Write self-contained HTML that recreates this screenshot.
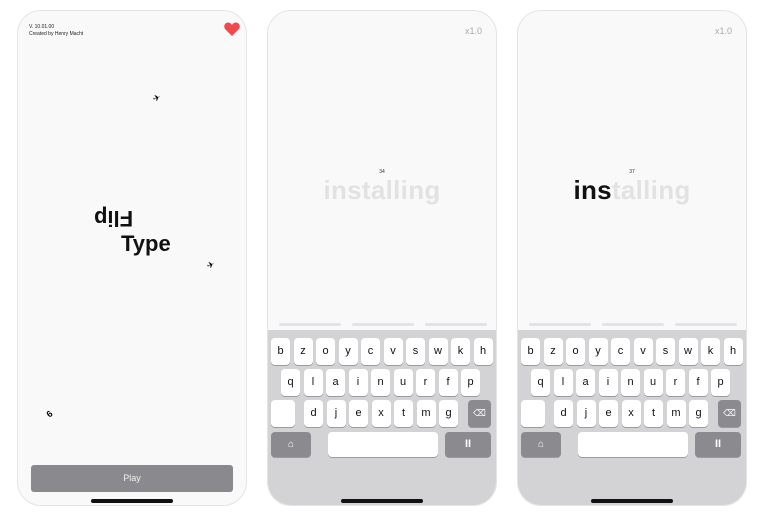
<!DOCTYPE html><html><head><style>
body{margin:0;width:757px;height:512px;background:#fff;position:relative;overflow:hidden;font-family:"Liberation Sans",sans-serif}
.ph{position:absolute;top:10px;width:228px;height:494px;border:1px solid #e4e4e4;border-radius:24px;background:#f9f9f9;overflow:hidden}
.a{position:absolute}
.kb{position:absolute;left:0;top:319px;width:228px;height:175px;background:#d3d3d6}
.k{position:absolute;width:19px;height:27px;background:#fff;border-radius:4px;box-shadow:0 1px 0 #9a9aa0;font-size:11px;text-align:center;line-height:26px;color:#111}
.d{background:#8a8a8f;color:#fff}
.hb{position:absolute;left:73px;top:488px;width:82px;height:4px;border-radius:2px;background:#111}
.sg{position:absolute;top:312px;height:3px;width:62px;background:#e3e3e3;border-radius:2px}
.tx{position:absolute;left:0;width:228px;text-align:center;top:164px;font-weight:bold;font-size:26px;color:#e2e2e2;letter-spacing:0.3px}
.num{position:absolute;left:0;width:228px;text-align:center;top:158px;font-size:5px;color:#333}
.x{position:absolute;right:14px;top:15px;font-size:9px;color:#aaa}
</style></head><body>
<div class="ph" style="left:17px">
<div class="a" style="left:11px;top:13px;font-size:5px;line-height:7px;color:#222">V. 10.01.00<br>Created by Henry Macht</div>
<svg class="a" style="left:206px;top:11px" width="16" height="14" viewBox="0 0 16 14"><path d="M8 14L1.5 7.5C-1 5 0.5 0.5 4 0.5c2 0 3.2 1.2 4 2.5C8.8 1.7 10 0.5 12 0.5c3.5 0 5 4.5 2.5 7z" fill="#f04a4f"/></svg>
<div class="a" style="left:76px;top:194px;font-weight:bold;font-size:22px;transform:rotate(180deg);color:#111">Flip</div>
<div class="a" style="left:103px;top:220px;font-weight:bold;font-size:22px;color:#111">Type</div>
<div class="a" style="left:135px;top:82px;font-size:9px;transform:rotate(-20deg)">✈</div>
<div class="a" style="left:189px;top:249px;font-size:9px;transform:rotate(-20deg)">✈</div>
<div class="a" style="left:29px;top:398px;font-size:9px;font-weight:bold;transform:rotate(-40deg)">6</div>
<div class="a" style="left:13px;top:454px;width:202px;height:27px;background:#8a8a8e;border-radius:3px;color:#f0f0f0;font-size:9px;text-align:center;line-height:27px">Play</div>
<div class="hb"></div>
</div>

<div class="ph" style="left:267px">
<div class="x">x1.0</div>
<div class="num">34</div>
<div class="tx">installing</div>
<div class="sg" style="left:11px"></div><div class="sg" style="left:84px"></div><div class="sg" style="left:157px"></div>
<div class="kb">
<div class="k" style="left:3px;top:8px">b</div><div class="k" style="left:25.5px;top:8px">z</div><div class="k" style="left:48px;top:8px">o</div><div class="k" style="left:70.5px;top:8px">y</div><div class="k" style="left:93px;top:8px">c</div><div class="k" style="left:115.5px;top:8px">v</div><div class="k" style="left:138px;top:8px">s</div><div class="k" style="left:160.5px;top:8px">w</div><div class="k" style="left:183px;top:8px">k</div><div class="k" style="left:205.5px;top:8px">h</div>
<div class="k" style="left:13px;top:39px">q</div><div class="k" style="left:35.5px;top:39px">l</div><div class="k" style="left:58px;top:39px">a</div><div class="k" style="left:80.5px;top:39px">i</div><div class="k" style="left:103px;top:39px">n</div><div class="k" style="left:125.5px;top:39px">u</div><div class="k" style="left:148px;top:39px">r</div><div class="k" style="left:170.5px;top:39px">f</div><div class="k" style="left:193px;top:39px">p</div>
<div class="k" style="left:3px;top:70px;width:24px"></div>
<div class="k" style="left:36px;top:70px">d</div><div class="k" style="left:58.5px;top:70px">j</div><div class="k" style="left:81px;top:70px">e</div><div class="k" style="left:103.5px;top:70px">x</div><div class="k" style="left:126px;top:70px">t</div><div class="k" style="left:148.5px;top:70px">m</div><div class="k" style="left:171px;top:70px">g</div>
<div class="k d" style="left:200px;top:70px;width:23px;font-size:9px">⌫</div>
<div class="k d" style="left:3px;top:102px;width:40px;height:25px;line-height:25px;font-size:10px">⌂</div>
<div class="k" style="left:60px;top:102px;width:110px;height:25px"></div>
<div class="k d" style="left:177px;top:102px;width:46px;height:25px;line-height:25px;font-weight:bold">II</div>
</div>
<div class="hb"></div>
</div>

<div class="ph" style="left:517px">
<div class="x">x1.0</div>
<div class="num">37</div>
<div class="tx"><span style="color:#111">ins</span>talling</div>
<div class="sg" style="left:11px"></div><div class="sg" style="left:84px"></div><div class="sg" style="left:157px"></div>
<div class="kb">
<div class="k" style="left:3px;top:8px">b</div><div class="k" style="left:25.5px;top:8px">z</div><div class="k" style="left:48px;top:8px">o</div><div class="k" style="left:70.5px;top:8px">y</div><div class="k" style="left:93px;top:8px">c</div><div class="k" style="left:115.5px;top:8px">v</div><div class="k" style="left:138px;top:8px">s</div><div class="k" style="left:160.5px;top:8px">w</div><div class="k" style="left:183px;top:8px">k</div><div class="k" style="left:205.5px;top:8px">h</div>
<div class="k" style="left:13px;top:39px">q</div><div class="k" style="left:35.5px;top:39px">l</div><div class="k" style="left:58px;top:39px">a</div><div class="k" style="left:80.5px;top:39px">i</div><div class="k" style="left:103px;top:39px">n</div><div class="k" style="left:125.5px;top:39px">u</div><div class="k" style="left:148px;top:39px">r</div><div class="k" style="left:170.5px;top:39px">f</div><div class="k" style="left:193px;top:39px">p</div>
<div class="k" style="left:3px;top:70px;width:24px"></div>
<div class="k" style="left:36px;top:70px">d</div><div class="k" style="left:58.5px;top:70px">j</div><div class="k" style="left:81px;top:70px">e</div><div class="k" style="left:103.5px;top:70px">x</div><div class="k" style="left:126px;top:70px">t</div><div class="k" style="left:148.5px;top:70px">m</div><div class="k" style="left:171px;top:70px">g</div>
<div class="k d" style="left:200px;top:70px;width:23px;font-size:9px">⌫</div>
<div class="k d" style="left:3px;top:102px;width:40px;height:25px;line-height:25px;font-size:10px">⌂</div>
<div class="k" style="left:60px;top:102px;width:110px;height:25px"></div>
<div class="k d" style="left:177px;top:102px;width:46px;height:25px;line-height:25px;font-weight:bold">II</div>
</div>
<div class="hb"></div>
</div>
</body></html>
